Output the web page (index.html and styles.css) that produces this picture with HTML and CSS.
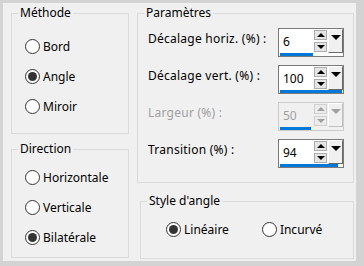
FILE: index.html
```html
<!DOCTYPE html>
<html lang="fr">
<head>
  <meta charset="UTF-8">
  <title>Décalage</title>
  <link rel="stylesheet" href="styles.css">
</head>
<body>

<div class="window">
  <div class="col-left">
    <fieldset class="group method">
      <legend>Méthode</legend>
      <div class="options">
        <label class="radio"><span class="dot"></span>Bord</label>
        <label class="radio"><span class="dot on"></span>Angle</label>
        <label class="radio"><span class="dot"></span>Miroir</label>
      </div>
    </fieldset>

    <fieldset class="group direction">
      <legend>Direction</legend>
      <div class="options">
        <label class="radio"><span class="dot"></span>Horizontale</label>
        <label class="radio"><span class="dot"></span>Verticale</label>
        <label class="radio"><span class="dot on"></span>Bilatérale</label>
      </div>
    </fieldset>
  </div>

  <div class="col-right">
    <fieldset class="group params">
      <legend>Paramètres</legend>
      <div class="rows">
        <div class="param-row">
          <span class="param-label">Décalage horiz. (%) :</span>
          <div class="spin">
            <div class="spin-top">
              <div class="spin-field">6</div>
              <div class="spin-arrows"><span class="arrow up"></span><span class="arrow down"></span></div>
              <div class="spin-drop"></div>
            </div>
            <div class="spin-bar"><span style="width: 53%"></span></div>
          </div>
        </div>
        <div class="param-row">
          <span class="param-label">Décalage vert. (%) :</span>
          <div class="spin">
            <div class="spin-top">
              <div class="spin-field">100</div>
              <div class="spin-arrows"><span class="arrow up"></span><span class="arrow down"></span></div>
              <div class="spin-drop"></div>
            </div>
            <div class="spin-bar"><span style="width: 100%"></span></div>
          </div>
        </div>
        <div class="param-row disabled">
          <span class="param-label">Largeur (%) :</span>
          <div class="spin">
            <div class="spin-top">
              <div class="spin-field">50</div>
              <div class="spin-arrows"><span class="arrow up"></span><span class="arrow down"></span></div>
              <div class="spin-drop"></div>
            </div>
            <div class="spin-bar"><span style="width: 50%"></span></div>
          </div>
        </div>
        <div class="param-row">
          <span class="param-label">Transition (%) :</span>
          <div class="spin">
            <div class="spin-top">
              <div class="spin-field">94</div>
              <div class="spin-arrows"><span class="arrow up"></span><span class="arrow down"></span></div>
              <div class="spin-drop"></div>
            </div>
            <div class="spin-bar"><span style="width: 94%"></span></div>
          </div>
        </div>
      </div>
    </fieldset>

    <fieldset class="group corner">
      <legend>Style d'angle</legend>
      <div class="options inline">
        <label class="radio"><span class="dot on"></span>Linéaire</label>
        <label class="radio"><span class="dot"></span>Incurvé</label>
      </div>
    </fieldset>
  </div>
</div>

</body>
</html>
```

FILE: styles.css
```css
* {
  box-sizing: border-box;
  margin: 0;
  padding: 0;
}

body {
  background: #d3d3d3;
  font-family: "Noto Sans", "Segoe UI", sans-serif;
  font-size: 12px;
  color: #000;
}

.window {
  width: 353px;
  height: 258px;
  margin: 3px 0 0 3px;
  padding: 2px 2px 0 8px;
  background: #f0f0f0;
  display: flex;
  gap: 8px;
}

.col-left {
  width: 118px;
  display: flex;
  flex-direction: column;
  gap: 7px;
}

.col-right {
  width: 217px;
  display: flex;
  flex-direction: column;
  gap: 10px;
}

/* group boxes */
.group {
  border: 1px solid #dadada;
  min-width: 0;
}

.group legend {
  margin-left: 6px;
  padding: 0 2px;
  line-height: 16px;
}

.method { height: 129px; }
.direction { height: 117px; }
.params { height: 178px; }
.corner { height: 66px; margin-left: 3px; }

/* radio buttons */
.options {
  padding-left: 13px;
}

.method .options { padding-top: 10px; }
.direction .options { padding-top: 5px; }

.options.inline {
  display: flex;
  gap: 33px;
  padding: 5px 0 0 25px;
}

.radio {
  display: flex;
  align-items: center;
  gap: 3px;
  height: 30px;
}

.dot {
  width: 15px;
  height: 15px;
  border: 1px solid #333;
  border-radius: 50%;
  background: #fff;
  display: grid;
  place-items: center;
}

.dot.on::after {
  content: "";
  width: 9px;
  height: 9px;
  border-radius: 50%;
  background: #333;
}

/* parameter rows */
.rows {
  display: flex;
  flex-direction: column;
  gap: 8px;
  padding: 7px 9px 0 10px;
}

.param-row {
  display: flex;
  justify-content: space-between;
  height: 29px;
}

.param-label {
  padding-top: 3px;
  line-height: 16px;
  letter-spacing: 0.25px;
}

.spin {
  width: 66px;
  height: 29px;
  border: 1px solid #7a7a7a;
  background: #fff;
  display: flex;
  flex-direction: column;
}

.spin-top {
  display: flex;
  height: 24px;
}

.spin-field {
  flex: 1;
  padding: 5px 0 0 4px;
  line-height: 16px;
}

.spin-arrows {
  width: 14px;
  display: flex;
  flex-direction: column;
  gap: 2px;
  padding: 1px 1px 0 0;
}

.arrow {
  height: 10px;
  background: #e5e5e5;
  border: 1px solid #adadad;
  display: grid;
  place-items: center;
}

.arrow::after {
  content: "";
  border-left: 4px solid transparent;
  border-right: 4px solid transparent;
}

.arrow.up::after { border-bottom: 4px solid #000; }
.arrow.down::after { border-top: 4px solid #000; }

.spin-drop {
  width: 15px;
  background: #f0f0f0;
  border-top: 1px solid #fff;
  border-left: 1px solid #fff;
  border-right: 1px solid #696969;
  border-bottom: 1px solid #696969;
  display: flex;
  justify-content: center;
  padding-top: 5px;
}

.spin-drop::after {
  content: "";
  height: 0;
  border-left: 5px solid transparent;
  border-right: 5px solid transparent;
  border-top: 5px solid #000;
}

.spin-bar {
  height: 3px;
  margin: 0 1px;
}

.spin-bar span {
  display: block;
  height: 3px;
  background: #0078d7;
}

/* disabled row */
.disabled .param-label,
.disabled .spin-field {
  color: #a0a0a0;
}

.disabled .spin {
  border-color: #cccccc;
  background: #f0f0f0;
}

.disabled .arrow {
  border-color: #d0d0d0;
  background: #ececec;
}

.disabled .arrow.up::after { border-bottom-color: #a0a0a0; }
.disabled .arrow.down::after { border-top-color: #a0a0a0; }

.disabled .spin-drop {
  border-right-color: #c0c0c0;
  border-bottom-color: #c0c0c0;
}

.disabled .spin-drop::after { border-top-color: #a0a0a0; }
```
